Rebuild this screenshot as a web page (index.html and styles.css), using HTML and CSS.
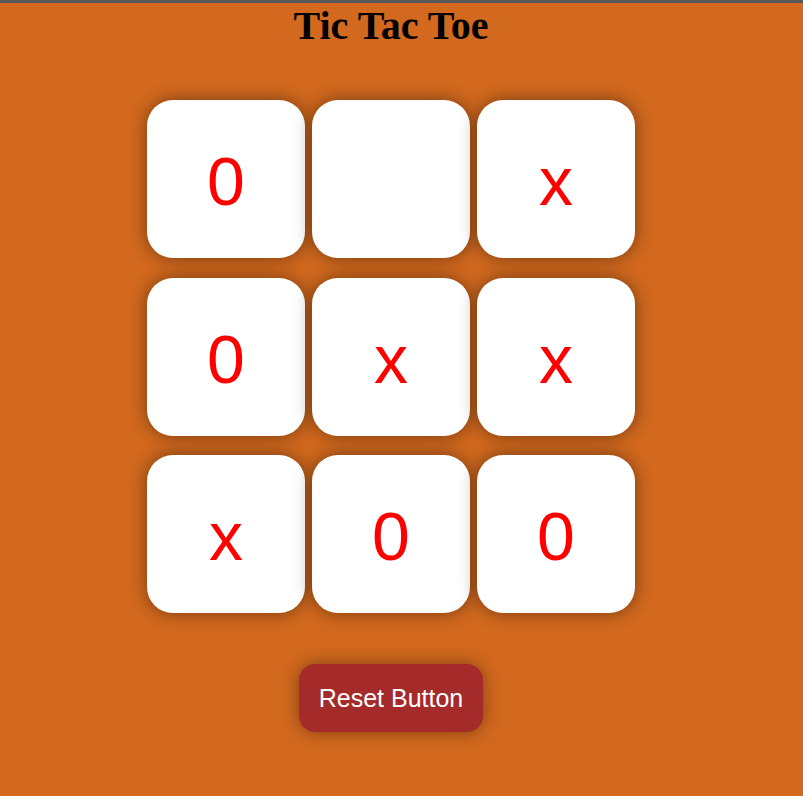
FILE: index.html
```html
<!DOCTYPE html>
<html lang="en">
<head>
<meta charset="utf-8">
<title>Tic Tac Toe</title>
<link rel="stylesheet" href="styles.css">
</head>
<body>
<main class="game">
  <h1 class="title">Tic Tac Toe</h1>
  <div class="board">
    <button class="cell">0</button>
    <button class="cell"></button>
    <button class="cell">x</button>
    <button class="cell">0</button>
    <button class="cell">x</button>
    <button class="cell">x</button>
    <button class="cell">x</button>
    <button class="cell">0</button>
    <button class="cell">0</button>
  </div>
  <button class="reset">Reset Button</button>
</main>
</body>
</html>
```

FILE: styles.css
```css
html, body {
  margin: 0;
  padding: 0;
}

body {
  background: #d2691e;
  border-top: 3px solid #595959;
  min-height: 793px;
}

.game {
  width: 782px;
  display: flex;
  flex-direction: column;
  align-items: center;
}

.title {
  margin: 0.5px 0 0 0;
  font-family: "Liberation Serif", "Times New Roman", serif;
  font-weight: bold;
  font-size: 40px;
  line-height: 44px;
  color: #000;
}

.board {
  margin-top: 52.5px;
  display: grid;
  grid-template-columns: repeat(3, 158px);
  grid-template-rows: repeat(3, 158px);
  column-gap: 7px;
  row-gap: 19.5px;
}

.cell {
  border: none;
  background: #fff;
  border-radius: 26px;
  box-shadow: 0 0 18px rgba(0, 0, 0, 0.45);
  font-family: "Liberation Sans", Arial, sans-serif;
  font-size: 68px;
  color: #f00;
  padding: 4px 0 0 0;
  display: flex;
  align-items: center;
  justify-content: center;
}

.reset {
  margin-top: 51px;
  width: 184px;
  height: 68px;
  border: none;
  border-radius: 16px;
  background: #a52a2a;
  color: #fff;
  font-family: "Liberation Sans", Arial, sans-serif;
  font-size: 25px;
  padding: 0;
  box-shadow: 0 0 18px rgba(0, 0, 0, 0.4);
}
```
